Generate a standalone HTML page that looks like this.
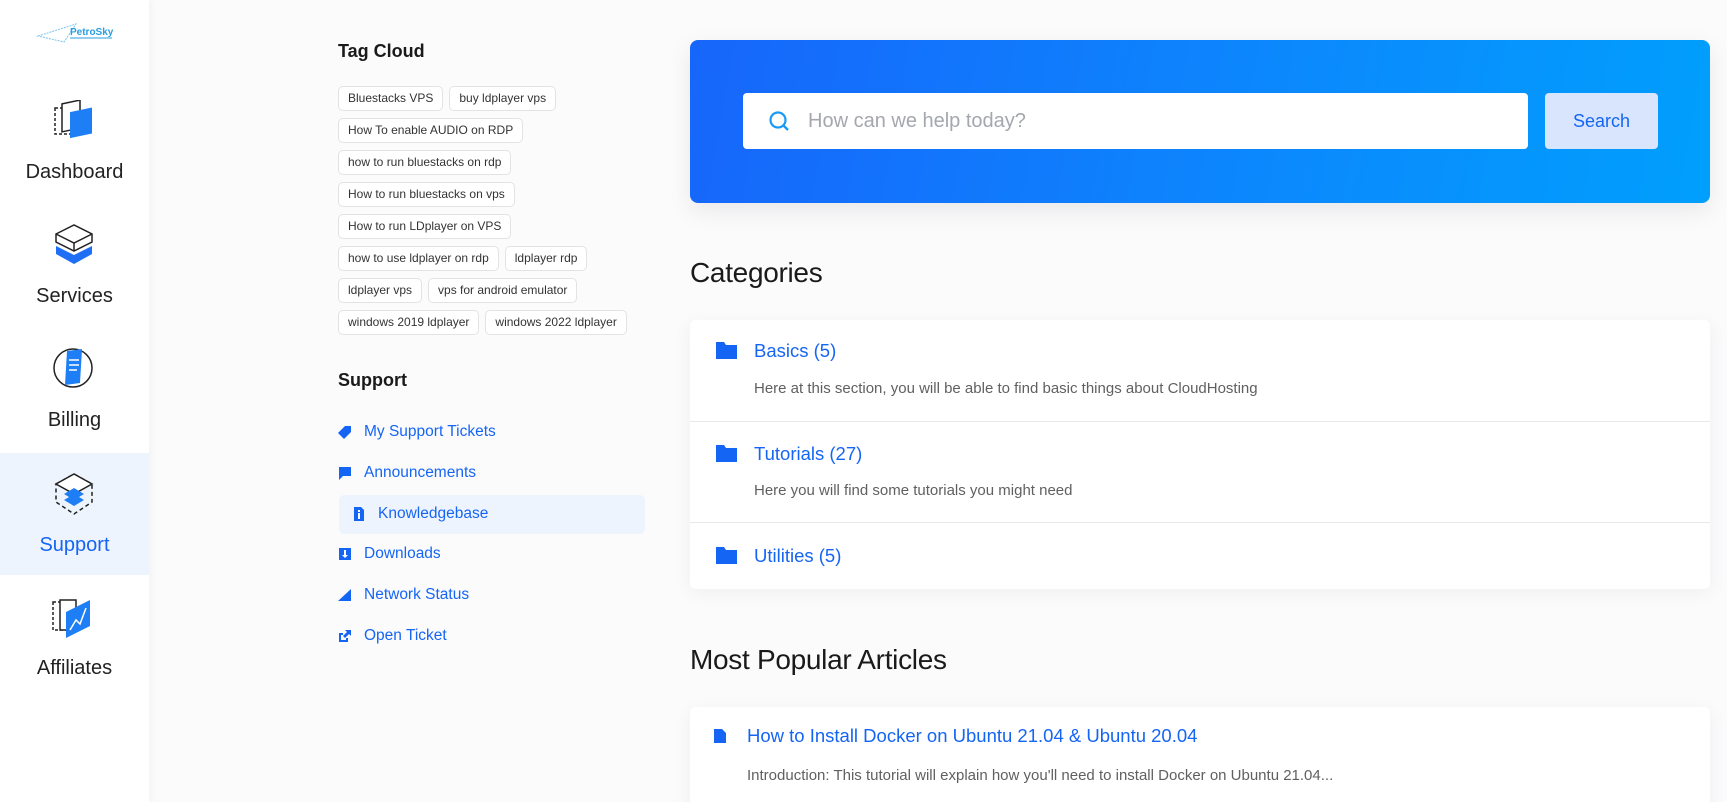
<!DOCTYPE html>
<html style="width:1727px;height:802px;overflow:hidden"><head><meta charset="utf-8"><style>
*{box-sizing:border-box;margin:0;padding:0}
body{width:1727px;height:802px;overflow:hidden;background:#fbfbfc;font-family:"Liberation Sans",sans-serif;position:relative;color:#222}
.side{position:absolute;left:0;top:0;width:149px;height:802px;background:#fff;box-shadow:2px 0 8px rgba(0,0,0,.04)}
.si{position:absolute;left:0;width:149px;text-align:center;font-size:20px;color:#222}
.a{position:absolute}
.tags{position:absolute;left:338px;top:86px}
.row{display:flex;gap:6px;height:32px}
.tag{height:25px;line-height:23px;padding:0 9px;border:1px solid #e3e3e6;border-radius:5px;font-size:12px;color:#333;background:#fff;white-space:nowrap}
h3{font-size:18px;font-weight:600;color:#1a1a1a}
.lk{position:absolute;left:338px;font-size:15.5px;color:#1565f5;display:flex;align-items:center;gap:12px}
.lk svg{width:14px;height:14px;fill:#1565f5}
.card{position:absolute;left:690px;width:1020px;background:#fff;border-radius:6px;box-shadow:0 4px 18px rgba(0,0,0,.05)}
.ct{font-size:18.5px;color:#1565f5;position:absolute;left:64px}
.cd{font-size:15px;color:#606060;position:absolute;left:64px}
.fold{position:absolute;left:26px;width:21px;height:17px}
</style></head><body>
<div class="side">
 <div class="a" style="left:36px;top:18px;width:80px;height:28px">
  <svg width="80" height="28"><path d="M2 18 L40 6 L28 24 Z" fill="none" stroke="#7cc4ee" stroke-width="1" stroke-dasharray="2 1"/><text x="34" y="17" font-size="10" font-weight="bold" fill="#2a9ee0" font-family="Liberation Sans">PetroSky</text><line x1="34" y1="20" x2="76" y2="20" stroke="#2a9ee0"/></svg>
 </div>
 <div class="a" style="left:52px;top:100px"><svg width="44" height="44"><rect x="3" y="8" width="18" height="26" fill="none" stroke="#222" stroke-dasharray="3 2" stroke-width="1.5"/><rect x="10" y="6" width="18" height="28" fill="#fff" stroke="#222" stroke-width="1.5" transform="skewY(-12)"/><rect x="18" y="10" width="22" height="26" fill="#1e7ef5" transform="skewY(-12) translate(0,6)"/></svg></div>
 <div class="si" style="top:161px">Dashboard</div>
 <div class="a" style="left:52px;top:222px"><svg width="44" height="44"><path d="M4 24 L22 33 L40 24 L40 32 L22 42 L4 32Z" fill="#1e6ff5"/><path d="M4 12 L22 3 L40 12 L40 20 L22 29 L4 20Z" fill="#fff" stroke="#222" stroke-width="1.5"/><path d="M4 12 L22 21 L40 12 M22 21 V29" fill="none" stroke="#222" stroke-width="1.5"/></svg></div>
 <div class="si" style="top:285px">Services</div>
 <div class="a" style="left:50px;top:345px"><svg width="46" height="46"><circle cx="23" cy="23" r="19" fill="none" stroke="#222" stroke-width="1.5"/><path d="M17 6 L32 4 L30 38 L15 40Z" fill="#1e7ef5"/><path d="M19 15h10M19 20h10M19 25h8" stroke="#fff" stroke-width="1.5"/></svg></div>
 <div class="si" style="top:409px">Billing</div>
 <div class="a" style="left:0;top:453px;width:149px;height:122px;background:#eef4fd"></div>
 <div class="a" style="left:52px;top:470px"><svg width="44" height="46"><path d="M4 14 L22 4 L40 14 V32 L22 44 L4 32Z" fill="none" stroke="#222" stroke-width="1.5" stroke-dasharray="4 3"/><path d="M4 14 L22 4 L40 14 L22 24Z" fill="#fff" stroke="#222" stroke-width="1.5"/><path d="M12 24 L22 30 L32 24 L22 18Z M12 30 L22 36 L32 30 L22 24Z" fill="#1e7ef5"/></svg></div>
 <div class="si" style="top:534px;color:#1565f5">Support</div>
 <div class="a" style="left:50px;top:594px"><svg width="46" height="46"><rect x="3" y="8" width="16" height="28" fill="none" stroke="#222" stroke-dasharray="3 2" stroke-width="1.5"/><rect x="10" y="6" width="16" height="30" fill="#fff" stroke="#222" stroke-width="1.5"/><path d="M16 18 L40 6 L40 32 L16 44Z" fill="#1e7ef5"/><path d="M20 36 L26 26 L30 30 L36 14" fill="none" stroke="#fff" stroke-width="1.5"/></svg></div>
 <div class="si" style="top:657px">Affiliates</div>
</div>

<h3 class="a" style="left:338px;top:41px">Tag Cloud</h3>
<div class="tags">
 <div class="row"><span class="tag">Bluestacks VPS</span><span class="tag">buy ldplayer vps</span></div>
 <div class="row"><span class="tag">How To enable AUDIO on RDP</span></div>
 <div class="row"><span class="tag">how to run bluestacks on rdp</span></div>
 <div class="row"><span class="tag">How to run bluestacks on vps</span></div>
 <div class="row"><span class="tag">How to run LDplayer on VPS</span></div>
 <div class="row"><span class="tag">how to use ldplayer on rdp</span><span class="tag">ldplayer rdp</span></div>
 <div class="row"><span class="tag">ldplayer vps</span><span class="tag">vps for android emulator</span></div>
 <div class="row"><span class="tag">windows 2019 ldplayer</span><span class="tag">windows 2022 ldplayer</span></div>
</div>

<h3 class="a" style="left:338px;top:370px">Support</h3>
<div class="lk" style="top:423px"><svg viewBox="0 0 14 14"><path d="M7 1 L13 1 L13 7 L6 14 L0 8Z"/></svg>My Support Tickets</div>
<div class="lk" style="top:464px"><svg viewBox="0 0 14 14"><path d="M1 1H13V10H5L1 14Z"/></svg>Announcements</div>
<div class="a" style="left:339px;top:495px;width:306px;height:39px;background:#eef4fd;border-radius:5px"></div>
<div class="lk" style="top:505px;left:352px"><svg viewBox="0 0 14 14"><path d="M2 0H9L12 3V14H2Z"/><rect x="6" y="6" width="2" height="6" fill="#fff"/><rect x="6" y="3" width="2" height="2" fill="#fff"/></svg>Knowledgebase</div>
<div class="lk" style="top:545px"><svg viewBox="0 0 14 14"><rect x="1" y="1" width="12" height="12"/><path d="M6 3h2v5h2l-3 3-3-3h2z" fill="#fff"/></svg>Downloads</div>
<div class="lk" style="top:586px"><svg viewBox="0 0 14 14"><path d="M13 1V13H0Z"/></svg>Network Status</div>
<div class="lk" style="top:627px"><svg viewBox="0 0 14 14"><path d="M1 4H5V6H3V11H8V9H10V13H1Z M7 1H13V7L11 5L7 9L5 7L9 3Z"/></svg>Open Ticket</div>

<div class="a" style="left:690px;top:40px;width:1020px;height:163px;border-radius:8px;background:linear-gradient(100deg,#1766fb 0%,#0b8afd 60%,#009ffd 100%);box-shadow:0 8px 24px rgba(0,0,0,.08)"></div>
<div class="a" style="left:743px;top:93px;width:785px;height:56px;background:#fff;border-radius:4px"></div>
<svg class="a" style="left:768px;top:110px" width="22" height="22"><circle cx="10" cy="10" r="7.5" fill="none" stroke="#1a9af5" stroke-width="2.2"/><path d="M15 15 L20 20" stroke="#1a9af5" stroke-width="2.4"/></svg>
<div class="a" style="left:808px;top:110px;font-size:20px;color:#a4a7ad">How can we help today?</div>
<div class="a" style="left:1545px;top:93px;width:113px;height:56px;background:#d8e5fc;border-radius:4px;text-align:center;line-height:56px;font-size:18px;color:#1565f5;font-weight:500">Search</div>

<div class="a" style="left:690px;top:257px;font-size:28px;color:#1a1a1a;letter-spacing:-0.3px">Categories</div>
<div class="card" style="top:320px;height:269px">
 <svg class="fold" style="top:22px" viewBox="0 0 21 17"><path d="M0 0H8L10 3H21V17H0Z" fill="#1565f5"/></svg>
 <div class="ct" style="top:20px">Basics (5)</div>
 <div class="cd" style="top:60px">Here at this section, you will be able to find basic things about CloudHosting</div>
 <div class="a" style="left:0;top:101px;width:1020px;height:1px;background:#e8e8ea"></div>
 <svg class="fold" style="top:125px" viewBox="0 0 21 17"><path d="M0 0H8L10 3H21V17H0Z" fill="#1565f5"/></svg>
 <div class="ct" style="top:123px">Tutorials (27)</div>
 <div class="cd" style="top:162px">Here you will find some tutorials you might need</div>
 <div class="a" style="left:0;top:202px;width:1020px;height:1px;background:#e8e8ea"></div>
 <svg class="fold" style="top:227px" viewBox="0 0 21 17"><path d="M0 0H8L10 3H21V17H0Z" fill="#1565f5"/></svg>
 <div class="ct" style="top:225px">Utilities (5)</div>
</div>

<div class="a" style="left:690px;top:644px;font-size:28px;color:#1a1a1a;letter-spacing:-0.3px">Most Popular Articles</div>
<div class="card" style="top:707px;height:120px">
 <svg class="a" style="left:24px;top:22px" width="12" height="14"><path d="M0 0H8L12 4V14H0Z" fill="#1565f5"/></svg>
 <div class="ct" style="top:18px;left:57px">How to Install Docker on Ubuntu 21.04 &amp; Ubuntu 20.04</div>
 <div class="cd" style="top:60px;left:57px">Introduction: This tutorial will explain how you'll need to install Docker on Ubuntu 21.04...</div>
</div>
</body></html>
